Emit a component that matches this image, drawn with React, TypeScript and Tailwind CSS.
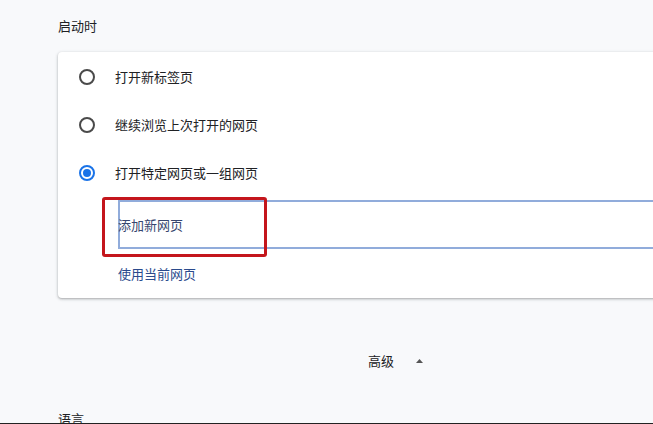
const font = { fontFamily: '"Noto Sans CJK SC", "Noto Sans", sans-serif' };

function Radio({ checked }: { checked?: boolean }) {
  if (checked) {
    return (
      <span className="flex h-4 w-4 items-center justify-center rounded-full border-2 border-[#1a73e8]">
        <span className="h-2 w-2 rounded-full bg-[#1a73e8]" />
      </span>
    );
  }
  return <span className="h-4 w-4 rounded-full border-2 border-[#4a4a4a]" />;
}

const options = [
  { label: "打开新标签页", checked: false },
  { label: "继续浏览上次打开的网页", checked: false },
  { label: "打开特定网页或一组网页", checked: true },
];

export default function App() {
  return (
    <div
      className="h-[424px] w-[653px] overflow-hidden border-b border-[#222] bg-[#f8f9fb] pl-[58px] text-[13px] text-[#202124]"
      style={font}
    >
      <div className="pt-[16px] leading-5">启动时</div>

      {/* Startup card */}
      <div className="relative mt-[16px] w-[640px] rounded bg-white pt-px shadow-[0_1px_2px_rgba(60,64,67,0.3),0_1px_3px_1px_rgba(60,64,67,0.12)]">
        {options.map((o) => (
          <div key={o.label} className="flex h-12 items-center pl-[21px]">
            <Radio checked={o.checked} />
            <span className="ml-5 leading-5">{o.label}</span>
          </div>
        ))}

        <div className="pl-[60px] pt-[3px]">
          <div className="flex h-[49px] items-center border-2 border-r-0 border-[#91acdb] text-[#36466e]">
            <span className="-ml-[2px] leading-5">添加新网页</span>
          </div>
          <div className="flex h-[49px] items-center text-[#2a4a8c]">
            <span className="leading-5">使用当前网页</span>
          </div>
        </div>

        {/* annotation */}
        <div className="absolute left-[44px] top-[145px] h-[60px] w-[165px] rounded-[3px] border-[3px] border-[#c4161c]" />
      </div>

      <div className="mt-[53px] flex h-5 items-center pl-[310px]">
        <span className="leading-5">高级</span>
        <svg width="7" height="4" viewBox="0 0 7 4" className="ml-[22px]">
          <path d="M3.5 0 L7 4 L0 4 Z" fill="#555" />
        </svg>
      </div>

      <div className="mt-[38px] leading-5">语言</div>
    </div>
  );
}
